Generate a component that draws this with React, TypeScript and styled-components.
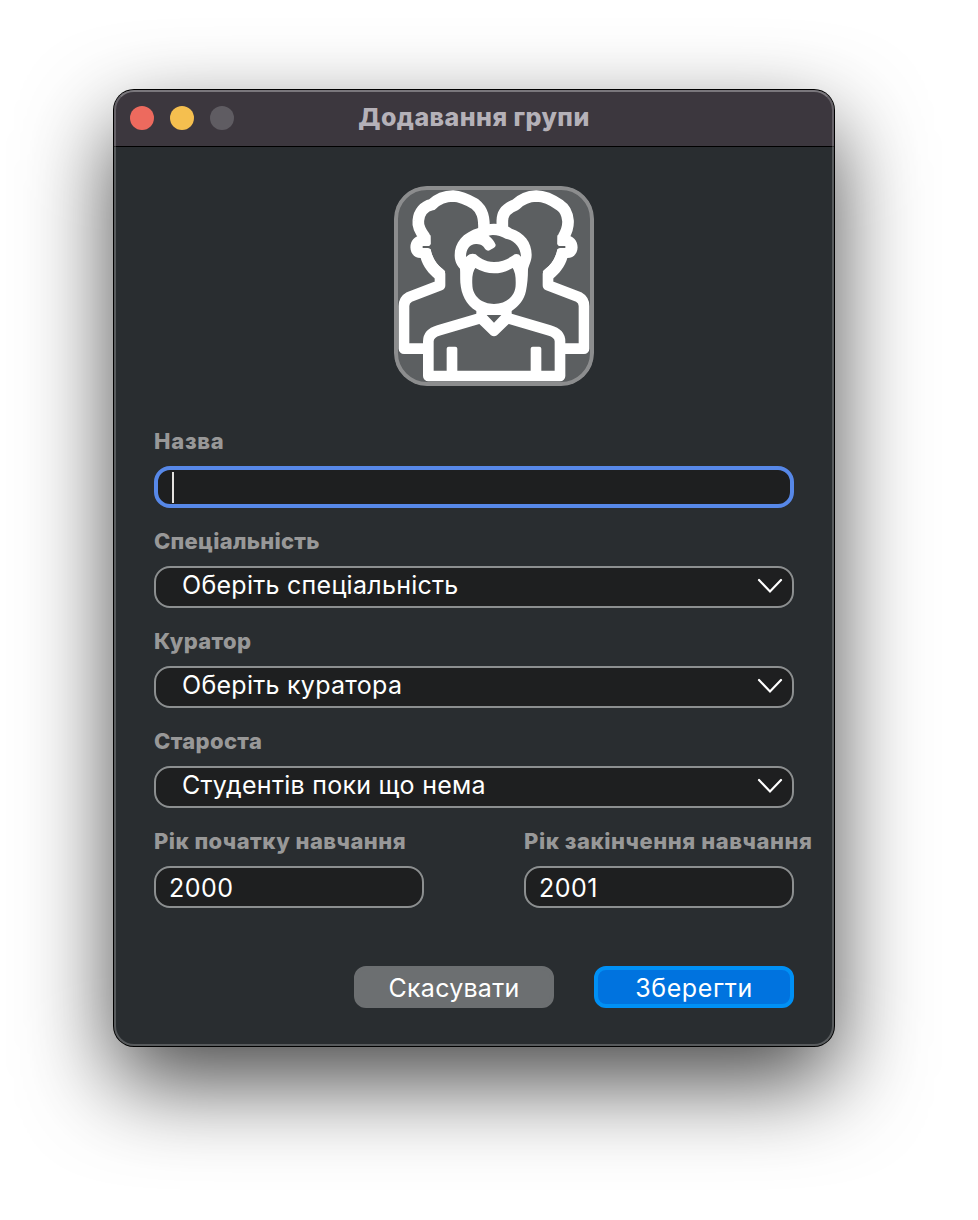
import React from "react";
import styled, { createGlobalStyle } from "styled-components";

const GlobalStyle = createGlobalStyle`
  body { margin: 0; background: #fff; font-family: Inter, "Liberation Sans", sans-serif; }
  *, *::before, *::after { box-sizing: border-box; }
`;

const Desktop = styled.main`
  display: flex;
  justify-content: center;
  align-items: flex-start;
  height: 1220px;
  padding: 90px 30px 0 0;
  overflow: hidden;
`;

const Window = styled.section`
  position: relative;
  width: 720px;
  height: 956px;
  border-radius: 20px;
  background: #292d30;
  box-shadow: 0 0 0 1px #000, 0 36px 90px rgba(0, 0, 0, 0.72);
  &::after {
    content: "";
    position: absolute;
    inset: 0;
    border: 2px solid rgba(255, 255, 255, 0.22);
    border-top-color: rgba(255, 255, 255, 0.32);
    border-radius: 20px;
    pointer-events: none;
  }
`;

const TitleBar = styled.header`
  display: grid;
  grid-template-columns: 1fr auto 1fr;
  align-items: center;
  height: 57px;
  padding: 0 16px;
  border-bottom: 1px solid #000;
  border-radius: 20px 20px 0 0;
  background: #3c373e;
`;

const Lights = styled.div`
  display: flex;
  gap: 16px;
`;

const Light = styled.span<{ $color: string }>`
  width: 24px;
  height: 24px;
  border-radius: 50%;
  background: ${(p) => p.$color};
`;

const Title = styled.h1`
  margin: 0;
  padding-bottom: 2px;
  font-size: 25px;
  line-height: 32px;
  font-weight: 800;
  letter-spacing: 0.45px;
  color: #b5b1b8;
  white-space: nowrap;
`;

const Form = styled.form`
  display: flex;
  flex-direction: column;
  padding: 39px 40px 0;
`;

const Avatar = styled.div`
  align-self: center;
  width: 200px;
  height: 200px;
  margin: 0 0 40px 40px;
  border-radius: 33px;
  background: #5c5f61;
  position: relative;
  overflow: hidden;
  &::before {
    content: "";
    position: absolute;
    inset: 0;
    border: 4px solid #8c8d8e;
    border-radius: 33px;
  }
  svg { position: relative; display: block; }
`;

const Field = styled.div`
  display: flex;
  flex-direction: column;
  width: 100%;
  height: 100px;
`;

const Label = styled.label<{ $spacing?: number }>`
  height: 40px;
  font-size: 22px;
  line-height: 30px;
  font-weight: 800;
  letter-spacing: ${(p) => p.$spacing ?? 0.35}px;
  color: #989898;
  white-space: nowrap;
`;

const Box = styled.div<{ $focused?: boolean; $select?: boolean }>`
  display: flex;
  align-items: center;
  justify-content: space-between;
  height: 42px;
  padding: ${(p) => (p.$select ? "0 9px 4px 26px" : p.$focused ? "0 14px" : "2px 13px 0")};
  border: ${(p) => (p.$focused ? "4px solid #5788e8" : "2px solid #8c8f90")};
  border-radius: 16px;
  background: #1e1f20;
  color: #fff;
  font-size: 25px;
  line-height: 30px;
  letter-spacing: ${(p) => (p.$select ? "0.27px" : "0.5px")};
  white-space: nowrap;
`;

const Caret = styled.span`
  width: 2px;
  height: 31px;
  background: #e4e2df;
`;

const Years = styled.div`
  display: grid;
  grid-template-columns: 270px 270px;
  gap: 100px;
`;

const Actions = styled.div`
  display: flex;
  justify-content: flex-end;
  gap: 40px;
  margin-top: 40px;
`;

const Button = styled.button<{ $primary?: boolean }>`
  width: 200px;
  height: 42px;
  padding: 2px 0 0;
  border: 4px solid ${(p) => (p.$primary ? "#0090f5" : "#6c6f71")};
  border-radius: 12px;
  background: ${(p) => (p.$primary ? "#0073df" : "#6c6f71")};
  color: #fff;
  font: 400 25px/32px Inter, "Liberation Sans", sans-serif;
  letter-spacing: ${(p) => (p.$primary ? "0.6px" : "0.25px")};
`;

const ChevronIcon = styled.svg`
  display: block;
  margin-top: 2px;
`;

const Chevron = () => (
  <ChevronIcon width="26" height="16" viewBox="0 0 26 16" fill="none" stroke="#fff" strokeWidth="2.2" strokeLinecap="round">
    <path d="M2 2 L13 13.5 L24 2" />
  </ChevronIcon>
);

const GroupIcon = () => (
  <svg width="200" height="200" viewBox="30 30 600 600" fill="none" stroke="#fff" strokeWidth="32" strokeLinejoin="round">
    <g strokeWidth="35">
      <path d="M122 206 L121 182 C107 162 101 150 103 134 C105 108 121 91 143 86 C162 68 182 60 207 60 C232 61 253 72 273 84 C296 102 301 124 300 165" />
      <path d="M538 206 L539 182 C549 165 553 150 552 134 C550 112 544 98 528 88 C506 72 482 60 457 60 C432 61 411 70 395 86 C370 95 355 110 355 134 V162" />
    </g>
    <path d="M134 518 H60 V390 Q60 372 76 363 L168 328 V293 C144 276 130 252 124 222" />
    <path d="M526 518 H600 V390 Q600 372 584 363 L492 328 V293 C516 276 530 252 536 222" />
    <g fill="#fff" stroke="none">
      <path d="M116 178 C68 178 68 246 110 246 C116 270 136 296 154 308 L184 286 C160 268 146 250 140 222 Q138 216 132 216 H116 V210 H136 L140 204 V178 Z" />
      <path d="M544 178 C592 178 592 246 550 246 C544 270 524 296 506 308 L476 286 C500 268 514 250 520 222 Q522 216 528 216 H544 V210 H524 L520 204 V178 Z" />
      <path
        fillRule="evenodd"
        d="M285 155 C300 147 315 143 330 143 C350 143 368 147 383 158 C420 170 443 198 443 236 C443 256 434 268 432 280 C432 305 430 325 426 345 C420 372 405 390 383 405 H277 C245 385 232 355 229 320 C228 305 229 290 228 278 C215 265 212 250 212 238 C212 200 235 170 285 155 Z
        M274 276 Q330 308 386 276 Q396 290 395 325 C395 362 365 384 330 384 C295 384 265 362 265 325 Q263 290 274 276 Z
        M246 243 C246 222 256 204 276 204 C292 203 300 212 304 220 Q312 228 322 220 Q336 214 335 206 Q330 192 314 179 C330 174 350 180 365 188 C392 194 410 215 411 242 Q405 232 392 235 C380 244 358 258 330 258 C302 258 285 244 275 235 Q258 230 246 243 Z"
      />
      <path
        fillRule="evenodd"
        d="M277 396 H383 V436 L370 448 L339 478 Q330 484 321 478 L290 448 L277 436 Z M308 417 L330 440 L352 417 Z"
      />
      <path d="M188 590 V518 Q188 512 194 512 H214 Q220 512 220 518 V590 Z" />
      <path d="M440 590 V518 Q440 512 446 512 H466 Q472 512 472 518 V590 Z" />
    </g>
    <path d="M284 428 L164 463 Q133 472 133 496 V600 H528 V496 Q528 472 496 463 L376 428" />
  </svg>
);

const SelectField = ({ label, value, spacing }: { label: string; value: string; spacing?: number }) => (
  <Field>
    <Label $spacing={spacing}>{label}</Label>
    <Box $select>
      <span>{value}</span>
      <Chevron />
    </Box>
  </Field>
);

export default function App() {
  return (
    <>
      <GlobalStyle />
      <Desktop>
        <Window>
          <TitleBar>
            <Lights>
              <Light $color="#ed6a5e" />
              <Light $color="#f5bf4f" />
              <Light $color="#5f5c62" />
            </Lights>
            <Title>Додавання групи</Title>
          </TitleBar>
          <Form>
            <Avatar>
              <GroupIcon />
            </Avatar>
            <Field>
              <Label $spacing={0.75}>Назва</Label>
              <Box $focused>
                <Caret />
              </Box>
            </Field>
            <SelectField label="Спеціальність" value="Оберіть спеціальність" spacing={0.25} />
            <SelectField label="Куратор" value="Оберіть куратора" />
            <SelectField label="Староста" value="Студентів поки що нема" />
            <Years>
              <Field>
                <Label $spacing={0.45}>Рік початку навчання</Label>
                <Box>2000</Box>
              </Field>
              <Field>
                <Label $spacing={0.55}>Рік закінчення навчання</Label>
                <Box>2001</Box>
              </Field>
            </Years>
            <Actions>
              <Button type="button">Скасувати</Button>
              <Button type="button" $primary>
                Зберегти
              </Button>
            </Actions>
          </Form>
        </Window>
      </Desktop>
    </>
  );
}
